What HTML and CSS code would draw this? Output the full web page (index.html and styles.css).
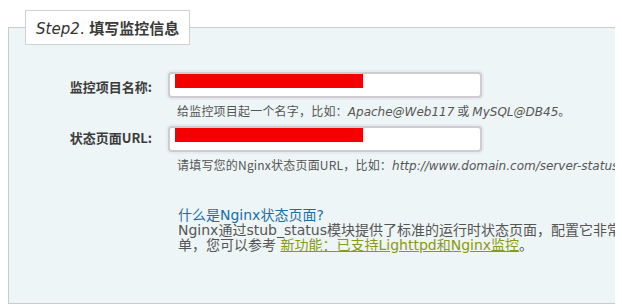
FILE: index.html
```html
<!DOCTYPE html>
<html lang="zh-CN">
<head>
    <meta charset="UTF-8">
    <title>填写监控信息</title>
    <link rel="stylesheet" href="styles.css">
</head>
<body>
    <div class="page">
        <fieldset class="step">
            <legend class="step-title"><em>Step2</em>. <b>填写监控信息</b></legend>
            <div class="step-body">
                <div class="form-grid">
                    <label class="field-label">监控项目名称:</label>
                    <div class="field-input"><span class="redact"></span></div>
                    <div class="field-hint">给监控项目起一个名字，比如：<em>Apache@Web117</em> 或 <em>MySQL@DB45</em>。</div>

                    <label class="field-label">状态页面URL:</label>
                    <div class="field-input"><span class="redact"></span></div>
                    <div class="field-hint">请填写您的Nginx状态页面URL，比如：<em>http://www.domain.com/server-status</em></div>
                </div>
                <div class="help">
                    <a class="help-title" href="#">什么是Nginx状态页面?</a>
                    <p class="help-text">Nginx通过stub_status模块提供了标准的运行时状态页面，配置它非常简<br>单，您可以参考 <a class="help-link" href="#">新功能：已支持Lighttpd和Nginx监控</a>。</p>
                </div>
            </div>
        </fieldset>
    </div>
</body>
</html>
```

FILE: styles.css
```css
body {
    margin: 0;
    background: #ffffff;
    font-family: "DejaVu Sans", "Noto Sans CJK SC", sans-serif;
    font-size: 12px;
    color: #333;
}
.page {
    padding: 10px 7px 0 8px;
}
.step {
    margin: 0;
    padding: 0 0 50px 0;
    border: 1px solid #c9cccf;
    border-right: 0;
    background: #eef5f6;
    min-width: 0;
}
.step-title {
    margin-left: 16px;
    padding: 0 10px;
    height: 33px;
    line-height: 33px;
    border: 1px solid #cfd2d4;
    background: #ffffff;
    font-size: 15px;
    color: #333;
}
.step-title em {
    font-style: italic;
}
.step-title b {
    font-family: "Noto Sans CJK SC", sans-serif;
    font-weight: bold;
    color: #3a3a3a;
}
.step-body {
    overflow: hidden;
}
.form-grid {
    display: grid;
    grid-template-columns: 159px 314px;
    align-items: center;
    padding-top: 27px;
}
.field-label {
    text-align: right;
    padding: 3px 16px 0 0;
    font-family: "Noto Sans CJK SC", sans-serif;
    font-size: 13px;
    font-weight: bold;
    color: #3c3c3c;
}
.field-input {
    height: 22px;
    border: 2px solid #cdcdcd;
    border-radius: 4px;
    background: #ffffff;
    box-shadow: 0 0 0 2px #e7e9f3;
    padding-left: 5px;
    margin-top: 7px;
}
.form-grid .field-input:nth-child(2) {
    margin-top: 0;
}
.redact {
    display: block;
    width: 188px;
    height: 14px;
    background: #f40000;
}
.field-hint {
    grid-column: 2;
    margin-top: 6px;
    padding-left: 9px;
    line-height: 14px;
    white-space: nowrap;
    color: #555;
    font-family: "Noto Sans CJK SC", sans-serif;
    letter-spacing: 0.2px;
}
.field-hint em {
    font-family: "DejaVu Sans", sans-serif;
    font-size: 12px;
    font-style: italic;
    letter-spacing: 0;
    color: #555;
}
.help {
    margin-top: 35px;
    padding-left: 169px;
    font-size: 14px;
    line-height: 15px;
    white-space: nowrap;
}
.help-title {
    display: block;
    color: #1d6ea6;
    text-decoration: none;
}
.help-text {
    margin: 0;
    color: #555;
}
.help-link {
    color: #8a9a12;
    text-decoration: underline;
}
```
